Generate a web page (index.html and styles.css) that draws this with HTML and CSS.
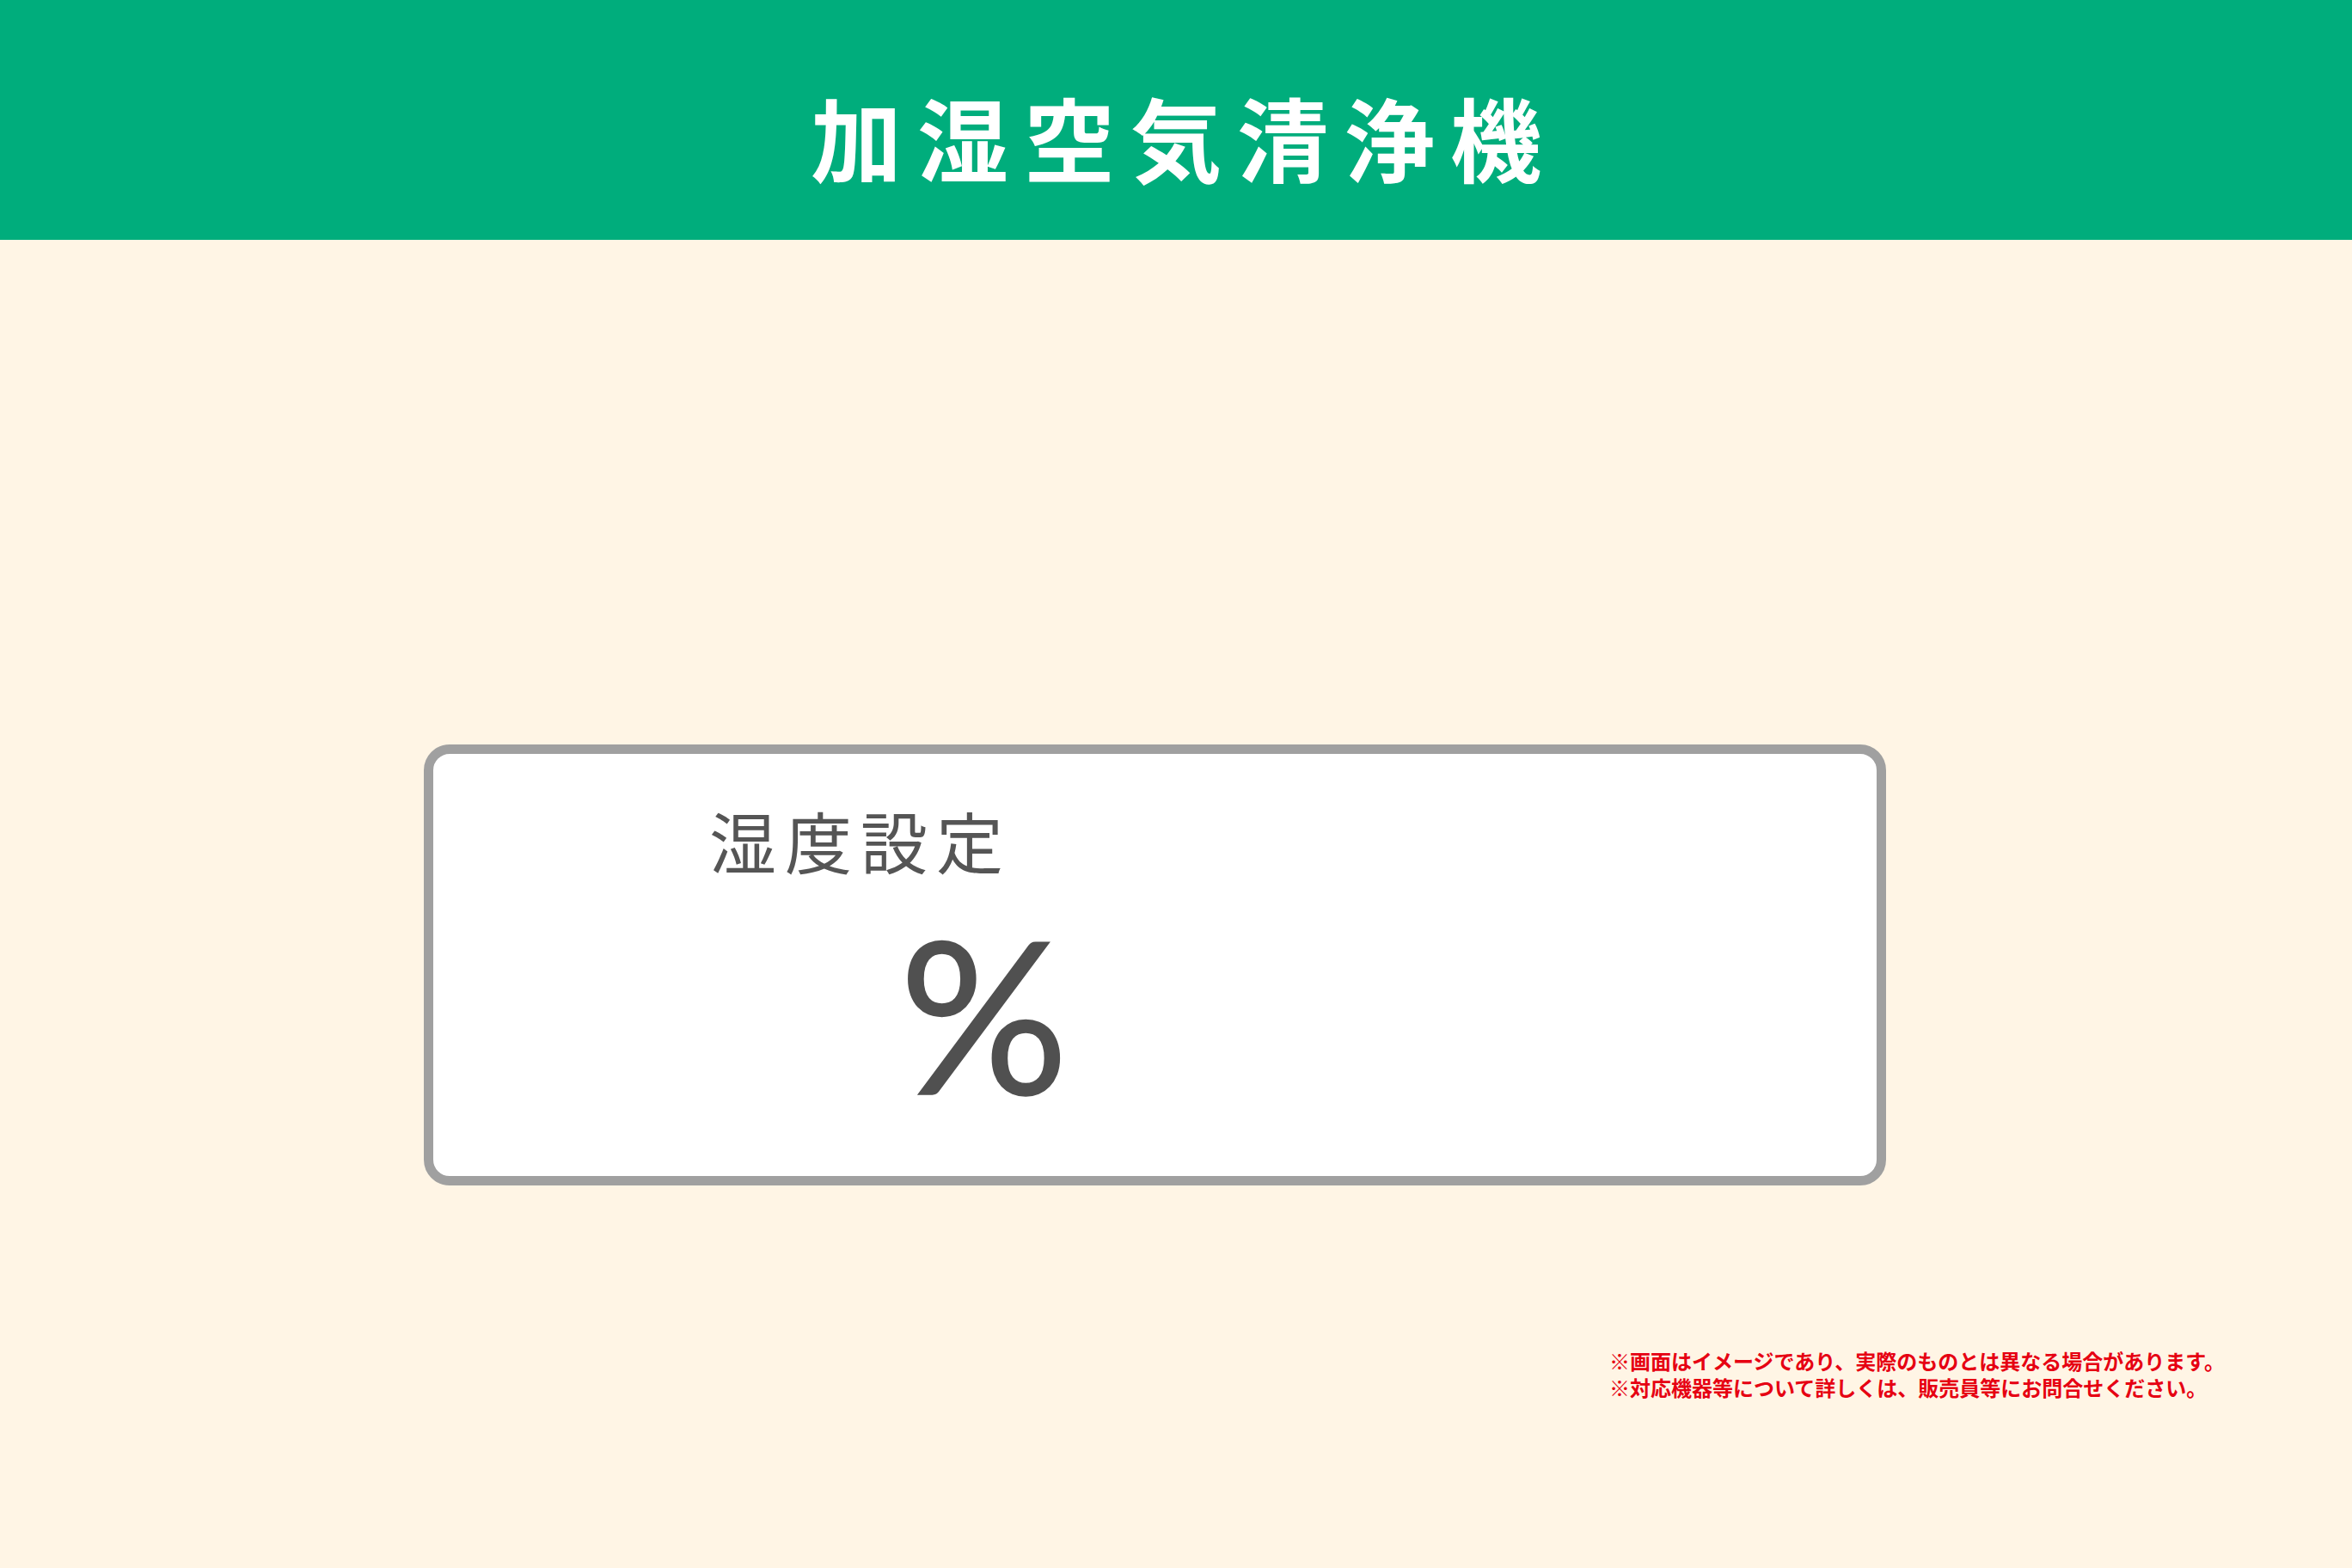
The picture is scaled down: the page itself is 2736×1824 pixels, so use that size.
FILE: index.html
```html
<!DOCTYPE html>
<html lang="ja">
<head>
<meta charset="utf-8">
<title>加湿空気清浄機</title>
<link rel="stylesheet" href="styles.css">
</head>
<body>
<header class="topbar">
  <h1 class="title">加湿空気清浄機</h1>
</header>
<main class="stage">
  <section class="panel">
    <div class="label">湿度設定</div>
    <div class="value"><span class="unit">%</span></div>
  </section>
  <div class="notes">
    <p>※画面はイメージであり、実際のものとは異なる場合があります。</p>
    <p>※対応機器等について詳しくは、販売員等にお問合せください。</p>
  </div>
</main>
</body>
</html>
```
FILE: styles.css
```css
html, body {
  margin: 0;
  padding: 0;
}
body {
  width: 2736px;
  height: 1824px;
  background: #fff5e5;
  font-family: "Noto Sans CJK JP", "Noto Sans", sans-serif;
  overflow: hidden;
}
.topbar {
  height: 279px;
  background: #00ad7c;
  box-sizing: border-box;
  padding-top: 105px;
}
.title {
  margin: 0;
  font-size: 106px;
  line-height: 1;
  font-weight: 700;
  color: #ffffff;
  text-align: center;
  letter-spacing: 18px;
  padding-left: 18px;
}
.stage {
  display: flex;
  flex-direction: column;
  padding-top: 587px;
  padding-left: 493px;
}
.panel {
  width: 1701px;
  height: 513px;
  box-sizing: border-box;
  border: 11px solid #a0a0a0;
  border-radius: 30px;
  background: #ffffff;
  padding-top: 61px;
  padding-left: 321px;
}
.label {
  font-size: 78px;
  line-height: 1;
  color: #555555;
  letter-spacing: 10px;
}
.value {
  margin-top: 39px;
  padding-left: 221px;
  color: #505050;
}
.unit {
  font-family: "Lato", "Noto Sans", sans-serif;
  font-size: 246px;
  line-height: 1;
  display: block;
  -webkit-text-stroke: 1.5px #505050;
}
.notes {
  margin-top: 188px;
  margin-left: 1379px;
  color: #e60012;
  font-weight: 700;
  font-size: 24px;
  line-height: 31px;
}
.notes p {
  margin: 0;
}
```
